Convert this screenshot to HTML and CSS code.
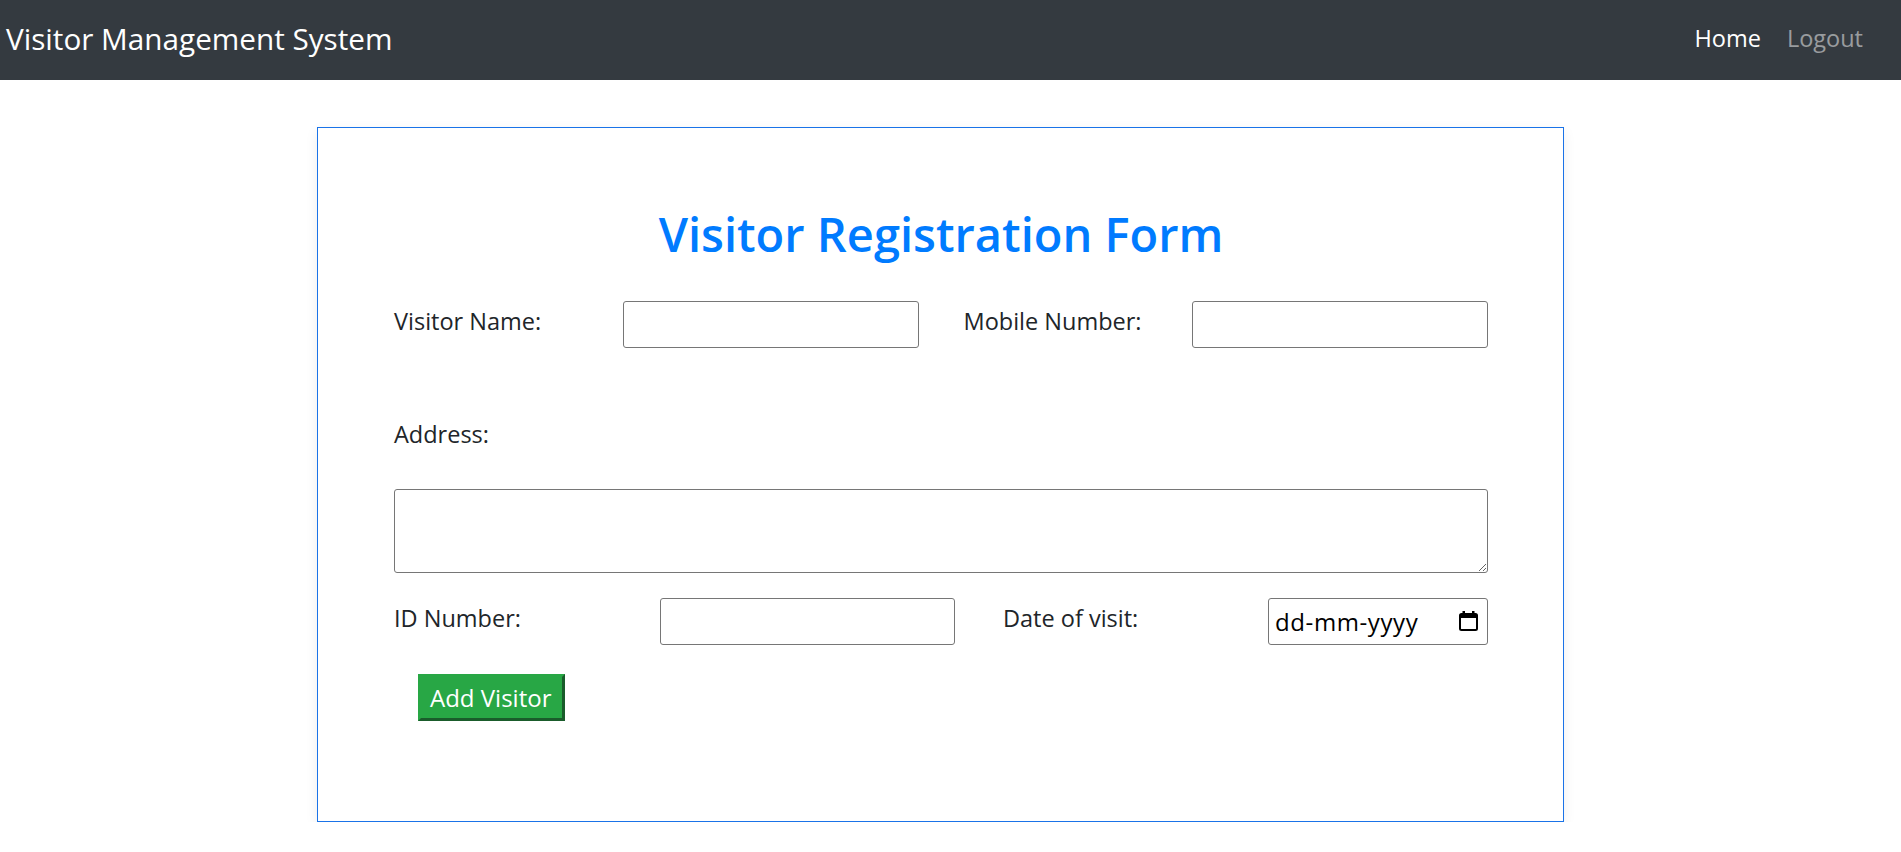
FILE: index.html
```html
<!DOCTYPE html>
<html lang="en">
<head>
<meta charset="utf-8">
<title>Visitor Management System</title>
<link rel="stylesheet" href="styles.css">
</head>
<body>
<nav class="navbar">
  <a class="brand" href="#">Visitor Management System</a>
  <div class="nav-links">
    <a class="nav-link active" href="#">Home</a>
    <a class="nav-link muted" href="#">Logout</a>
  </div>
</nav>

<main class="page">
  <form class="card">
    <h1 class="title">Visitor Registration Form</h1>

    <div class="row row-top">
      <label class="lbl" for="vname">Visitor Name:</label>
      <input class="field" id="vname" type="text">
      <label class="lbl" for="mobile">Mobile Number:</label>
      <input class="field" id="mobile" type="text">
    </div>

    <label class="lbl lbl-block" for="address">Address:</label>
    <textarea class="area" id="address"></textarea>

    <div class="row row-bottom">
      <label class="lbl" for="idnum">ID Number:</label>
      <input class="field" id="idnum" type="text">
      <label class="lbl lbl-date" for="vdate">Date of visit:</label>
      <div class="date-field">
        <input class="date-input" id="vdate" type="text" placeholder="dd-mm-yyyy">
        <svg class="cal-icon" width="19" height="20" viewBox="0 0 19 20" aria-hidden="true">
          <rect x="3.5" y="0" width="2.5" height="4" fill="#000"/>
          <rect x="13" y="0" width="2.5" height="4" fill="#000"/>
          <rect x="1" y="3" width="17" height="16" rx="1.5" fill="none" stroke="#000" stroke-width="2"/>
          <rect x="1" y="3" width="17" height="4" fill="#000"/>
        </svg>
      </div>
    </div>

    <div class="actions">
      <button class="btn-add" type="button">Add Visitor</button>
    </div>
  </form>
</main>
</body>
</html>
```

FILE: styles.css
```css
* {
  box-sizing: border-box;
}

html, body {
  margin: 0;
  padding: 0;
  background: #ffffff;
}

body {
  font-family: "Open Sans", "Noto Sans", "Liberation Sans", sans-serif;
  color: #212529;
  font-size: 23.5px;
}

.navbar {
  height: 80px;
  background: #343a40;
  display: flex;
  align-items: center;
  justify-content: space-between;
  padding: 0 26px 2px 6px;
}

.brand {
  color: #ffffff;
  text-decoration: none;
  font-size: 29.7px;
  line-height: 1;
}

.nav-links {
  display: flex;
  align-items: center;
}

.nav-link {
  text-decoration: none;
  font-size: 23.5px;
  padding: 0 12px;
  line-height: 1;
}

.nav-link.active {
  color: #ffffff;
}

.nav-link.muted {
  color: rgba(255, 255, 255, 0.5);
  padding-left: 14px;
}

.page {
  padding: 47px 0 0 317px;
}

.card {
  width: 1247px;
  height: 695px;
  border: 1px solid #1a73e8;
  box-shadow: 0 4px 12px rgba(0, 0, 0, 0.07);
  padding: 78px 75px 0 76px;
  display: flex;
  flex-direction: column;
  align-items: flex-start;
}

.title {
  align-self: stretch;
  margin: 0 0 37px 0;
  text-align: center;
  color: #007bff;
  font-size: 47px;
  font-weight: 600;
  line-height: 57.6px;
}

.row {
  display: grid;
  column-gap: 45px;
  align-items: start;
  align-self: stretch;
}

.row-top {
  grid-template-columns: 183.5px 296px 183.5px 296px;
}

.row-bottom {
  grid-template-columns: 221px 295px 223px 220px;
}

.lbl {
  display: block;
  line-height: 40px;
  white-space: nowrap;
}

.lbl-date {
  padding-left: 3px;
}

.lbl-block {
  margin-top: 66px;
}

.field {
  display: block;
  width: 100%;
  height: 47px;
  border: 1px solid #767676;
  border-radius: 3px;
  background: #ffffff;
  font: inherit;
  padding: 0 6px;
}

.area {
  display: block;
  align-self: stretch;
  height: 84px;
  margin-top: 35px;
  margin-bottom: 25px;
  border: 1px solid #767676;
  border-radius: 3px;
  font: inherit;
  padding: 4px 6px;
}

.date-field {
  display: flex;
  align-items: center;
  width: 100%;
  height: 47px;
  border: 1px solid #767676;
  border-radius: 3px;
  padding: 0 9px 0 6px;
}

.date-input {
  flex: 1;
  min-width: 0;
  border: 0;
  outline: none;
  padding: 0;
  font: inherit;
  font-size: 24px;
  letter-spacing: 0.6px;
  color: #000000;
  background: transparent;
}

.date-input::placeholder {
  color: #000000;
  opacity: 1;
}

.cal-icon {
  flex: none;
  margin-top: -1px;
}

.actions {
  margin-top: 29px;
  padding-left: 24px;
}

.btn-add {
  display: block;
  width: 147px;
  height: 47px;
  background: #28a745;
  color: #ffffff;
  font: inherit;
  font-size: 24px;
  border: 3px solid;
  border-color: #28a745 #1a5c2b #1a5c2b #28a745;
  padding: 0 0 0 9px;
  text-align: left;
  white-space: nowrap;
}
```
